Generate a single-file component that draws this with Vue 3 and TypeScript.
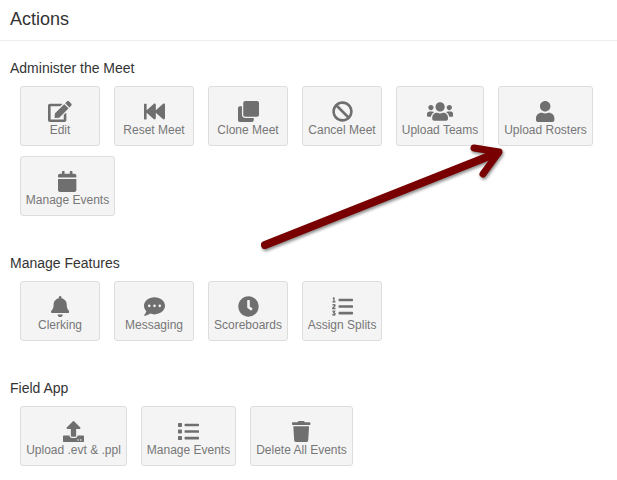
<script setup lang="ts">
interface Icon { w: number; d: string }
interface Action { label: string; icon: Icon; width?: number }
interface Section { title: string; actions: Action[] }

const icons: Record<string, Icon> = {
  edit: { w: 576, d: 'M402.6 83.2l90.2 90.2c3.8 3.8 3.8 10 0 13.8L274.4 405.6l-92.8 10.3c-12.4 1.4-22.9-9.1-21.5-21.5l10.3-92.8L388.8 83.2c3.8-3.8 10-3.8 13.8 0zm162-22.9l-48.8-48.8c-15.2-15.2-39.9-15.2-55.2 0l-35.4 35.4c-3.8 3.8-3.8 10 0 13.8l90.2 90.2c3.8 3.8 10 3.8 13.8 0l35.4-35.4c15.2-15.3 15.2-40 0-55.2zM384 346.2V448H64V128h229.8c3.2 0 6.2-1.3 8.5-3.5l40-40c7.6-7.6 2.2-20.5-8.5-20.5H48C21.5 64 0 85.5 0 112v352c0 26.5 21.5 48 48 48h352c26.5 0 48-21.5 48-48V306.2c0-10.7-12.9-16-20.5-8.5l-40 40c-2.2 2.3-3.5 5.3-3.5 8.5z' },
  fastBackward: { w: 512, d: 'M0 436V76c0-6.6 5.4-12 12-12h40c6.6 0 12 5.4 12 12v151.9L235.5 71.4C256.1 54.3 288 68.6 288 96v131.9L459.5 71.4C480.1 54.3 512 68.6 512 96v320c0 27.4-31.9 41.7-52.5 24.6L288 285.3V416c0 27.4-31.9 41.7-52.5 24.6L64 285.3V436c0 6.6-5.4 12-12 12H12c-6.6 0-12-5.4-12-12z' },
  clone: { w: 512, d: 'M464 0c26.51 0 48 21.49 48 48v288c0 26.51-21.49 48-48 48H176c-26.51 0-48-21.49-48-48V48c0-26.51 21.49-48 48-48h288M176 416c-44.112 0-80-35.888-80-80V128H48c-26.51 0-48 21.49-48 48v288c0 26.51 21.49 48 48 48h288c26.51 0 48-21.49 48-48v-48H176z' },
  ban: { w: 512, d: 'M256 8C119.034 8 8 119.033 8 256s111.034 248 248 248 248-111.034 248-248S392.967 8 256 8zm130.108 117.892c65.448 65.448 70 165.481 20.677 235.637L150.47 105.216c70.204-49.356 170.226-44.735 235.638 20.676zM125.892 386.108c-65.448-65.448-70-165.481-20.677-235.637L361.53 406.784c-70.203 49.356-170.226 44.736-235.638-20.676z' },
  users: { w: 640, d: 'M96 224c35.3 0 64-28.7 64-64s-28.7-64-64-64-64 28.7-64 64 28.7 64 64 64zm448 0c35.3 0 64-28.7 64-64s-28.7-64-64-64-64 28.7-64 64 28.7 64 64 64zm32 32h-64c-17.6 0-33.5 7.1-45.1 18.6 40.3 22.1 68.9 62 75.1 109.4h66c17.7 0 32-14.3 32-32v-32c0-35.3-28.7-64-64-64zm-256 0c61.9 0 112-50.1 112-112S381.9 32 320 32 208 82.1 208 144s50.1 112 112 112zm76.8 32h-8.3c-20.8 10-43.9 16-68.5 16s-47.6-6-68.5-16h-8.3C179.6 288 128 339.6 128 403.2V432c0 26.5 21.5 48 48 48h288c26.5 0 48-21.5 48-48v-28.8c0-63.6-51.6-115.2-115.2-115.2zm-223.7-13.4C161.5 263.1 145.6 256 128 256H64c-35.3 0-64 28.7-64 64v32c0 17.7 14.3 32 32 32h65.9c6.3-47.4 34.9-87.3 75.2-109.4z' },
  user: { w: 448, d: 'M224 256c70.7 0 128-57.3 128-128S294.7 0 224 0 96 57.3 96 128s57.3 128 128 128zm89.6 32h-16.7c-22.2 10.2-46.9 16-72.9 16s-50.6-5.8-72.9-16h-16.7C60.2 288 0 348.2 0 422.4V464c0 26.5 21.5 48 48 48h352c26.5 0 48-21.5 48-48v-41.6c0-74.2-60.2-134.4-134.4-134.4z' },
  calendar: { w: 448, d: 'M12 192h424c6.6 0 12 5.4 12 12v260c0 26.5-21.5 48-48 48H48c-26.5 0-48-21.5-48-48V204c0-6.6 5.4-12 12-12zm436-44v-36c0-26.5-21.5-48-48-48h-48V12c0-6.6-5.4-12-12-12h-40c-6.6 0-12 5.4-12 12v52H160V12c0-6.6-5.4-12-12-12h-40c-6.6 0-12 5.4-12 12v52H48C21.5 64 0 85.5 0 112v36c0 6.6 5.4 12 12 12h424c6.6 0 12-5.4 12-12z' },
  bell: { w: 448, d: 'M224 512c35.32 0 63.97-28.65 63.97-64H160.03c0 35.35 28.65 64 63.97 64zm215.39-149.71c-19.32-20.76-55.47-51.99-55.47-154.29 0-77.7-54.48-139.9-127.94-155.16V32c0-17.67-14.32-32-31.98-32s-31.98 14.33-31.98 32v20.84C118.56 68.1 64.08 130.3 64.08 208c0 102.3-36.15 133.53-55.47 154.29-6 6.45-8.66 14.16-8.61 21.71.11 16.4 12.98 32 32.1 32h383.8c19.12 0 32-15.6 32.1-32 .05-7.55-2.61-15.27-8.61-21.71z' },
  comment: { w: 512, d: 'M256 32C114.6 32 0 125.1 0 240c0 49.6 21.4 95 57 130.7C44.5 421.1 2.7 466 2.2 466.5c-2.2 2.3-2.8 5.7-1.5 8.7S4.8 480 8 480c66.3 0 116-31.8 140.6-51.4 32.7 12.3 69 19.4 107.4 19.4 141.4 0 256-93.1 256-208S397.4 32 256 32zM128 272c-17.7 0-32-14.3-32-32s14.3-32 32-32 32 14.3 32 32-14.3 32-32 32zm128 0c-17.7 0-32-14.3-32-32s14.3-32 32-32 32 14.3 32 32-14.3 32-32 32zm128 0c-17.7 0-32-14.3-32-32s14.3-32 32-32 32 14.3 32 32-14.3 32-32 32z' },
  clock: { w: 512, d: 'M256,8C119,8,8,119,8,256S119,504,256,504,504,393,504,256,393,8,256,8Zm92.49,313h0l-20,25a16,16,0,0,1-22.49,2.5h0l-67-49.72a40,40,0,0,1-15-31.23V112a16,16,0,0,1,16-16h32a16,16,0,0,1,16,16V256l58,42.5A16,16,0,0,1,348.49,321Z' },
  listOl: { w: 512, d: 'M61.77 401l17.5-20.15a19.92 19.92 0 0 0 5.07-14.19v-3.31C84.34 356 80.5 352 73 352H16a8 8 0 0 0-8 8v16a8 8 0 0 0 8 8h22.83a157.41 157.41 0 0 0-11 12.31l-5.61 7c-4 5.07-5.25 10.13-2.8 14.88l1.05 1.93c3 5.76 6.29 7.88 12.25 7.88h4.73c10.33 0 15.94 2.44 15.94 9.09 0 4.72-4.2 8.22-14.36 8.22a41.54 41.54 0 0 1-15.47-3.12c-6.49-3.88-11.74-3.5-15.6 3.12l-5.59 9.31c-3.72 6.13-3.19 11.72 2.63 15.94 7.71 4.69 20.38 9.44 37 9.44 34.16 0 48.5-22.75 48.5-44.12-.03-14.38-9.12-29.76-28.73-34.88zM496 224H176a16 16 0 0 0-16 16v32a16 16 0 0 0 16 16h320a16 16 0 0 0 16-16v-32a16 16 0 0 0-16-16zm0-160H176a16 16 0 0 0-16 16v32a16 16 0 0 0 16 16h320a16 16 0 0 0 16-16V80a16 16 0 0 0-16-16zm0 320H176a16 16 0 0 0-16 16v32a16 16 0 0 0 16 16h320a16 16 0 0 0 16-16v-32a16 16 0 0 0-16-16zM16 160h64a8 8 0 0 0 8-8v-16a8 8 0 0 0-8-8H64V40a8 8 0 0 0-8-8H32a8 8 0 0 0-7.14 4.42l-8 16A8 8 0 0 0 24 64h8v64H16a8 8 0 0 0-8 8v16a8 8 0 0 0 8 8zm-3.91 160H80a8 8 0 0 0 8-8v-16a8 8 0 0 0-8-8H41.32c3.29-10.29 48.34-18.68 48.34-56.44 0-29.06-25-39.56-44.47-39.56-21.36 0-33.8 10-40.46 18.75-4.37 5.59-3 10.84 2.8 15.37l8.58 6.88c5.61 4.56 11 2.47 16.12-2.44a13.44 13.44 0 0 1 9.46-3.84c3.33 0 9.28 1.56 9.28 8.75C51 248.19 0 257.31 0 304.59v4C0 316 5.08 320 12.09 320z' },
  upload: { w: 512, d: 'M296 384h-80c-13.3 0-24-10.7-24-24V192h-87.7c-17.8 0-26.7-21.5-14.1-34.1L242.3 5.7c7.5-7.5 19.8-7.5 27.3 0l152.2 152.2c12.6 12.6 3.7 34.1-14.1 34.1H320v168c0 13.3-10.7 24-24 24zm216-8v112c0 13.3-10.7 24-24 24H24c-13.3 0-24-10.7-24-24V376c0-13.3 10.7-24 24-24h136v8c0 30.9 25.1 56 56 56h80c30.9 0 56-25.1 56-56v-8h136c13.3 0 24 10.7 24 24zm-124 88c0-11-9-20-20-20s-20 9-20 20 9 20 20 20 20-9 20-20zm64 0c0-11-9-20-20-20s-20 9-20 20 9 20 20 20 20-9 20-20z' },
  list: { w: 512, d: 'M80 368H16a16 16 0 0 0-16 16v64a16 16 0 0 0 16 16h64a16 16 0 0 0 16-16v-64a16 16 0 0 0-16-16zm0-320H16A16 16 0 0 0 0 64v64a16 16 0 0 0 16 16h64a16 16 0 0 0 16-16V64a16 16 0 0 0-16-16zm0 160H16a16 16 0 0 0-16 16v64a16 16 0 0 0 16 16h64a16 16 0 0 0 16-16v-64a16 16 0 0 0-16-16zm416 176H176a16 16 0 0 0-16 16v32a16 16 0 0 0 16 16h320a16 16 0 0 0 16-16v-32a16 16 0 0 0-16-16zm0-320H176a16 16 0 0 0-16 16v32a16 16 0 0 0 16 16h320a16 16 0 0 0 16-16V80a16 16 0 0 0-16-16zm0 160H176a16 16 0 0 0-16 16v32a16 16 0 0 0 16 16h320a16 16 0 0 0 16-16v-32a16 16 0 0 0-16-16z' },
  trash: { w: 448, d: 'M432 32H312l-9.4-18.7A24 24 0 0 0 281.1 0H166.8a23.72 23.72 0 0 0-21.4 13.3L136 32H16A16 16 0 0 0 0 48v32a16 16 0 0 0 16 16h416a16 16 0 0 0 16-16V48a16 16 0 0 0-16-16zM53.2 467a48 48 0 0 0 47.9 45h245.8a48 48 0 0 0 47.9-45L416 128H32z' },
}

const sections: Section[] = [
  {
    title: 'Administer the Meet',
    actions: [
      { label: 'Edit', icon: icons.edit },
      { label: 'Reset Meet', icon: icons.fastBackward },
      { label: 'Clone Meet', icon: icons.clone },
      { label: 'Cancel Meet', icon: icons.ban },
      { label: 'Upload Teams', icon: icons.users, width: 88 },
      { label: 'Upload Rosters', icon: icons.user, width: 95 },
      { label: 'Manage Events', icon: icons.calendar, width: 95 },
    ],
  },
  {
    title: 'Manage Features',
    actions: [
      { label: 'Clerking', icon: icons.bell },
      { label: 'Messaging', icon: icons.comment },
      { label: 'Scoreboards', icon: icons.clock },
      { label: 'Assign Splits', icon: icons.listOl, width: 80 },
    ],
  },
  {
    title: 'Field App',
    actions: [
      { label: 'Upload .evt & .ppl', icon: icons.upload, width: 107 },
      { label: 'Manage Events', icon: icons.list, width: 95 },
      { label: 'Delete All Events', icon: icons.trash, width: 103 },
    ],
  },
]
</script>

<template>
  <div class="page">
    <h1 class="title">Actions</h1>
    <section v-for="s in sections" :key="s.title" class="section">
      <h2 class="heading">{{ s.title }}</h2>
      <div class="grid">
        <button
          v-for="a in s.actions"
          :key="a.label"
          type="button"
          class="action"
          :style="a.width ? { width: `${a.width}px` } : undefined"
        >
          <svg class="icon" :viewBox="`0 0 ${a.icon.w} 512`" aria-hidden="true"><path :d="a.icon.d" /></svg>
          <span class="label">{{ a.label }}</span>
        </button>
      </div>
    </section>
    <svg class="arrow" width="617" height="480" viewBox="0 0 617 480" aria-hidden="true">
      <g fill="none" stroke="#780000" stroke-linecap="round" stroke-linejoin="round">
        <path stroke-width="8" d="M265 245 L497 153" />
        <path stroke-width="7" d="M474 148 L499 152 L483 174" />
      </g>
    </svg>
  </div>
</template>

<style scoped>
.page {
  position: relative;
  width: 617px;
  height: 480px;
  overflow: hidden;
  background: #fff;
  font-family: "Liberation Sans", Arial, sans-serif;
  color: #333;
}
.title {
  margin: 0;
  height: 41px;
  padding: 9px 0 0 10px;
  box-sizing: border-box;
  border-bottom: 1px solid #eee;
  font-size: 18px;
  line-height: 20px;
  font-weight: 400;
}
.section {
  padding-left: 10px;
  height: 125px;
}
.section:first-of-type {
  height: 200px;
}
.heading {
  margin: 0;
  padding-top: 19px;
  height: 45px;
  box-sizing: border-box;
  font-size: 14px;
  line-height: 16px;
  font-weight: 400;
}
.section + .section .heading {
  padding-top: 14px;
  height: 40px;
}
.grid {
  display: flex;
  flex-wrap: wrap;
  gap: 10px 14px;
  padding-left: 10px;
}
.action {
  display: flex;
  flex-direction: column;
  align-items: center;
  min-width: 80px;
  height: 60px;
  box-sizing: border-box;
  padding: 14px 5px 0;
  border: 1px solid #ddd;
  border-radius: 3px;
  background: #f4f4f4;
  color: #777;
  font-family: inherit;
  font-size: 12px;
}
.icon {
  display: block;
  height: 21px;
  fill: #706f6f;
}
.label {
  line-height: 14px;
  margin-top: 1px;
  white-space: nowrap;
}
.arrow {
  position: absolute;
  left: 0;
  top: 0;
  pointer-events: none;
  filter: drop-shadow(1px 2px 1.5px rgba(0, 0, 0, 0.45));
}
</style>
